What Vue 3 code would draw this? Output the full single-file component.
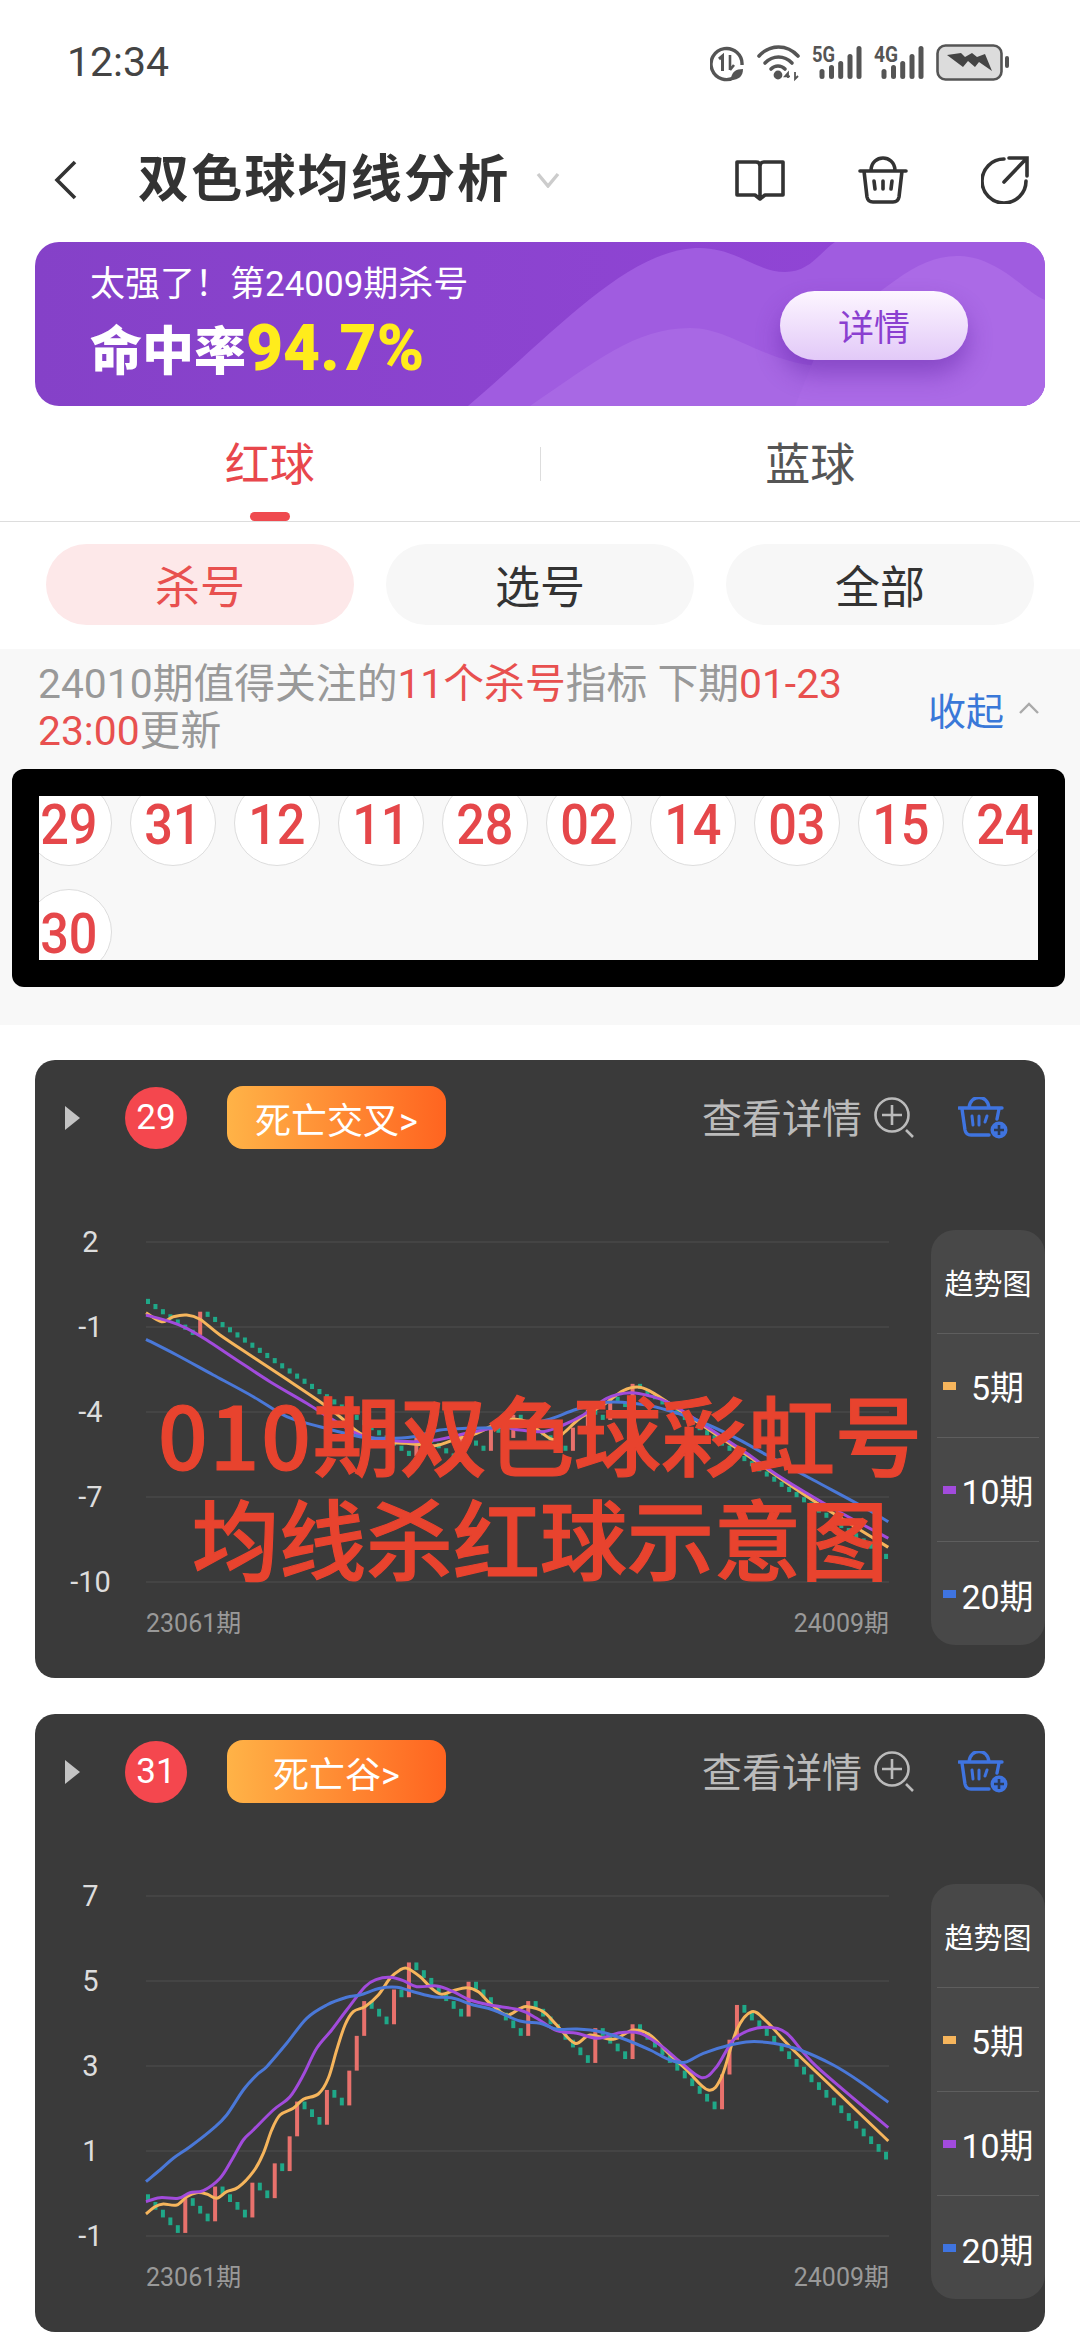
<script setup>
const upFrac = 27 / 33
const downFrac = 6 / 33
const STEP_X = 7.455

// smooth line through points (catmull-rom to bezier)
const smoothPath = (pts) => {
  let d = `M${pts[0][0].toFixed(1)} ${pts[0][1].toFixed(1)}`
  for (let i = 0; i < pts.length - 1; i++) {
    const p0 = pts[Math.max(0, i - 1)]
    const p1 = pts[i]
    const p2 = pts[i + 1]
    const p3 = pts[Math.min(pts.length - 1, i + 2)]
    const c1x = p1[0] + (p2[0] - p0[0]) / 6
    const c1y = p1[1] + (p2[1] - p0[1]) / 6
    const c2x = p2[0] - (p3[0] - p1[0]) / 6
    const c2y = p2[1] - (p3[1] - p1[1]) / 6
    d += `C${c1x.toFixed(1)} ${c1y.toFixed(1)} ${c2x.toFixed(1)} ${c2y.toFixed(1)} ${p2[0].toFixed(1)} ${p2[1].toFixed(1)}`
  }
  return d
}

const scaled = (pts, dx, dy) => pts.map(([x, y]) => [x / 3 + dx, y / 3 + dy])

const buildBars = ({ hits, pxPerUnit, startY }) => {
  const bars = []
  let y = startY
  for (let i = 0; i < 100; i++) {
    const hit = hits.includes(i)
    const delta = hit ? -upFrac * pxPerUnit : downFrac * pxPerUnit
    const prev = i === 0 ? y - delta : y
    const next = i === 0 ? y : y + delta
    bars.push({
      x: i * STEP_X,
      y: Math.min(prev, next),
      h: Math.abs(delta),
      color: hit ? '#e8716c' : '#1fa888'
    })
    y = next
  }
  return bars
}

const crossLines = [
  {
    color: '#f6b55c',
    d: smoothPath([
      ...scaled([[78, 128], [125, 155], [160, 140], [200, 135], [240, 148], [300, 195], [400, 262], [500, 328], [600, 395], [660, 440], [720, 490], [790, 515], [860, 520], [945, 527], [1000, 510], [1070, 490]], -26, 28),
      ...scaled([[50, 160], [95, 148], [140, 155], [215, 208], [250, 190], [300, 145], [370, 105], [430, 62], [480, 52], [530, 75], [590, 115], [680, 175], [800, 255], [900, 325], [1020, 405], [1225, 532]], 334, 128)
    ])
  },
  {
    color: '#a24bdc',
    d: smoothPath([
      ...scaled([[78, 135], [150, 155], [200, 175], [260, 210], [350, 270], [450, 335], [560, 400], [640, 450], [720, 495], [800, 510], [880, 515], [950, 510], [1040, 490]], -26, 28),
      ...scaled([[60, 172], [120, 180], [190, 185], [250, 165], [310, 135], [380, 85], [450, 68], [510, 78], [570, 100], [680, 170], [800, 250], [900, 320], [1050, 410], [1225, 505]], 334, 128)
    ])
  },
  {
    color: '#4a78d8',
    d: smoothPath([
      ...scaled([[78, 208], [170, 255], [280, 315], [400, 380], [500, 440], [600, 470], [720, 500], [800, 505], [880, 500], [960, 480], [1040, 475]], -26, 28),
      ...scaled([[100, 170], [200, 150], [290, 118], [380, 97], [440, 98], [500, 105], [560, 120], [650, 150], [760, 200], [860, 255], [1000, 330], [1130, 400], [1225, 455]], 334, 128)
    ])
  }
]

const valleyLines = [
  {
    color: '#f6b55c',
    d: smoothPath([
      ...scaled([[78, 822], [105, 800], [130, 792], [170, 795], [200, 770], [230, 758], [260, 762], [290, 775], [320, 755], [355, 742], [400, 695], [430, 640], [455, 570], [480, 525], [520, 505], [550, 478], [595, 462], [625, 415], [650, 330], [675, 255], [700, 215], [735, 200], [775, 165], [810, 115], [840, 90], [862, 85], [900, 110], [935, 145], [965, 163], [1000, 152], [1040, 143], [1075, 155], [1110, 190], [1160, 225]], -26, 44),
      ...scaled([[60, 205], [84, 200], [130, 215], [170, 255], [225, 310], [270, 285], [340, 298], [400, 270], [450, 285], [500, 335], [560, 390], [625, 450], [665, 410], [710, 270], [755, 215], [800, 245], [870, 320], [1000, 445], [1165, 603]], 354, 44)
    ])
  },
  {
    color: '#a24bdc',
    d: smoothPath([
      ...scaled([[78, 785], [120, 773], [175, 775], [210, 758], [250, 752], [300, 715], [335, 660], [370, 600], [400, 570], [460, 510], [510, 470], [550, 405], [590, 325], [635, 270], [680, 210], [735, 140], [770, 118], [810, 112], [850, 122], [890, 140], [950, 138], [1000, 155], [1050, 180], [1110, 195]], -26, 44),
      ...scaled([[60, 210], [110, 235], [170, 272], [230, 280], [295, 295], [360, 278], [420, 280], [480, 315], [540, 365], [605, 413], [650, 380], [700, 300], [750, 270], [800, 262], [860, 280], [950, 380], [1165, 563]], 354, 44)
    ])
  },
  {
    color: '#4a78d8',
    d: smoothPath([
      ...scaled([[78, 725], [120, 690], [160, 655], [210, 620], [280, 565], [320, 525], [370, 450], [410, 405], [440, 380], [500, 310], [560, 235], [620, 195], [680, 172], [720, 165], [780, 145], [830, 142], [880, 155], [940, 170], [1000, 175], [1060, 195], [1120, 210]], -26, 44),
      ...scaled([[60, 243], [120, 250], [170, 268], [230, 267], [300, 275], [380, 300], [450, 330], [510, 360], [555, 367], [610, 340], [690, 315], [750, 305], [820, 310], [900, 330], [1000, 375], [1080, 425], [1165, 487]], 354, 44)
    ])
  }
]

const cards = [
  {
    num: '29',
    tag: '死亡交叉>',
    labels: ['2', '-1', '-4', '-7', '-10'],
    overlay: true,
    bars: buildBars({ hits: [7, 36, 42, 46, 49, 57, 59, 62, 65], pxPerUnit: 85 / 3, startY: 62 }),
    lines: crossLines
  },
  {
    num: '31',
    tag: '死亡谷>',
    labels: ['7', '5', '3', '1', '-1'],
    overlay: false,
    bars: buildBars({ hits: [5, 9, 14, 17, 19, 20, 24, 27, 28, 29, 33, 35, 43, 51, 60, 65, 77, 78, 79], pxPerUnit: 42.5, startY: 306 }),
    lines: valleyLines
  }
]

const killNumbers = ['29', '31', '12', '11', '28', '02', '14', '03', '15', '24', '30']
const grid = [0, 85, 170, 255, 340]
const legend = [
  { label: '5期', color: '#f6b55c' },
  { label: '10期', color: '#a24bdc' },
  { label: '20期', color: '#3f74e0' }
]
const signalBars = [
  { dx: 0, top: 67 },
  { dx: 9.5, top: 63 },
  { dx: 18.7, top: 59 },
  { dx: 28, top: 52 },
  { dx: 37, top: 44 }
]
</script>

<template>
  <div class="page">
    <div class="status-bar">
      <span class="time">12:34</span>
      <svg class="status-icons" width="305" height="44" viewBox="710 38 305 44">
        <g fill="none" stroke="#555" stroke-width="3.4">
          <path d="M735 75 A15.5 15.5 0 1 1 742 63" />
          <path d="M719 57 l3.5 -3 v15" stroke-width="3" />
          <path d="M730 53 v15 M730 68 l4 -5" stroke-width="2.6" />
        </g>
        <path d="M731 78 C731 70 736 67 743 67 C743 74 739 78 731 78Z" fill="#555" />

        <g fill="none" stroke="#555" stroke-width="3.6" stroke-linecap="round">
          <path d="M759 54 C770 42 787 42 798 54" />
          <path d="M765 61 C773 53 784 53 792 61" />
          <path d="M771 67 C775 63 781 63 785 67" />
        </g>
        <circle cx="778" cy="73" r="4.4" fill="#555" />
        <path d="M788 76 v-5 l-3 3.4 h5 M795 70 v7 l3 -3" fill="none" stroke="#555" stroke-width="1.8" />

        <text x="812" y="60" class="net-label" textLength="23" lengthAdjust="spacingAndGlyphs">5G</text>
        <rect v-for="b in signalBars" :key="'a' + b.dx" :x="819.5 + b.dx" :y="b.top" width="5" :height="77 - b.top" rx="2.5" fill="#555" />
        <text x="874" y="60" class="net-label" textLength="24" lengthAdjust="spacingAndGlyphs">4G</text>
        <rect v-for="b in signalBars" :key="'b' + b.dx" :x="881.5 + b.dx" :y="b.top" width="5" :height="77 - b.top" rx="2.5" fill="#555" />

        <rect x="937.5" y="43.5" width="64" height="34" rx="8" fill="#dcdcdc" stroke="#555" stroke-width="2.6" />
        <path d="M947 53 L961 51 L965 55 L972 51 L977 55 L985 52 L992 69 L979 60 L975 65 L968 59 L963 65Z" fill="#444" />
        <rect x="1005" y="54" width="4" height="12" rx="2" fill="#555" />
      </svg>
    </div>

    <div class="nav-bar">
      <svg class="back-icon" width="24" height="40" viewBox="0 0 24 40">
        <path d="M21 2 L3 20 L21 38" fill="none" stroke="#333" stroke-width="3.6" />
      </svg>
      <h1 class="title">双色球均线分析</h1>
      <svg class="title-arrow" width="24" height="16" viewBox="0 0 24 16">
        <path d="M2 2 L12 14 L22 2" fill="none" stroke="#ccc" stroke-width="3.4" />
      </svg>
      <div class="nav-actions">
        <svg width="50" height="42" viewBox="0 0 50 42">
          <path d="M2 3 H21 Q25 3 25 7 Q25 3 29 3 H48 V36 H30 L25 40 L20 36 H2Z M25 7 V38" fill="none" stroke="#333" stroke-width="3.6" stroke-linejoin="round" />
        </svg>
        <svg width="50" height="48" viewBox="0 0 50 48">
          <path d="M13 14 C14 -2 36 -2 37 14 M2 15 H48 M6 15 L9 41 Q10 46 15 46 H35 Q40 46 41 41 L44 15" fill="none" stroke="#333" stroke-width="3.6" stroke-linecap="round" />
          <path d="M16 25 L17 33 M25 25 V33 M34 25 L33 33" fill="none" stroke="#333" stroke-width="3.6" stroke-linecap="round" />
        </svg>
        <svg width="49" height="48" viewBox="0 0 49 48">
          <path d="M23 3 A22 22 0 1 0 45 25 M23 26 L45 3 M28 2 H46 V20" fill="none" stroke="#333" stroke-width="3.6" stroke-linecap="round" />
        </svg>
      </div>
    </div>

    <div class="banner">
      <svg class="banner-waves" width="1010" height="164" viewBox="0 0 1010 164">
        <path d="M433 164 C520 90 590 10 660 6 C700 4 720 30 750 30 C775 30 785 10 800 0 H1010 V164Z" fill="#a05ce0" />
        <path d="M495 164 C560 120 600 86 655 86 C700 86 730 125 800 125 L1010 164Z" fill="#a868e4" />
        <path d="M790 90 C850 50 880 12 925 14 C965 16 990 50 1010 58 V164 H760Z" fill="#ab6ae6" />
      </svg>
      <div class="banner-text">
        <p class="banner-line">太强了！第24009期杀号</p>
        <p class="banner-rate">命中率<span class="rate-num">94.7%</span></p>
      </div>
      <button class="banner-btn">详情</button>
    </div>

    <div class="tabs">
      <div class="tab active">红球</div>
      <div class="tab-divider"></div>
      <div class="tab">蓝球</div>
    </div>

    <div class="pills">
      <div class="pill active">杀号</div>
      <div class="pill">选号</div>
      <div class="pill">全部</div>
    </div>

    <section class="kill-section">
      <div class="notice-row">
        <p class="notice">24010期值得关注的<em>11个杀号</em>指标 下期<em>01-23 23:00</em>更新</p>
        <div class="collapse">
          收起
          <svg width="22" height="14" viewBox="0 0 22 14">
            <path d="M2 12 L11 3 L20 12" fill="none" stroke="#aaa" stroke-width="2.4" />
          </svg>
        </div>
      </div>
      <div class="black-box">
        <div class="ball-clip">
          <div class="ball-grid">
            <div v-for="n in killNumbers" :key="n" class="ball"><span class="ball-num">{{ n }}</span></div>
          </div>
        </div>
      </div>
    </section>

    <div class="card-list">
      <article v-for="card in cards" :key="card.num" class="card">
        <header class="card-head">
          <i class="play"></i>
          <span class="num-ball">{{ card.num }}</span>
          <span class="tag">{{ card.tag }}</span>
          <span class="detail">查看详情</span>
          <svg class="zoom-icon" width="42" height="42" viewBox="0 0 42 42">
            <circle cx="19" cy="18" r="16.5" fill="none" stroke="#bbb" stroke-width="2.6" />
            <path d="M19 8 V28 M9 18 H29 M33 33 L40 40" fill="none" stroke="#bbb" stroke-width="2.6" />
          </svg>
          <svg class="cart-icon" width="50" height="42" viewBox="0 0 50 42">
            <path d="M11 11 C12 -3 30 -3 31 11 M1 11 H44 M4 12 L7 33 Q8 38 13 38 H31 M41 12 L39 22" fill="none" stroke="#3f74e0" stroke-width="3.4" stroke-linecap="round" />
            <path d="M14 19 L15 28 M21 19 V28 M29 19 L27 25" fill="none" stroke="#3f74e0" stroke-width="3" stroke-linecap="round" />
            <circle cx="41" cy="33" r="8.5" fill="#3f74e0" />
            <path d="M41 28 V38 M36 33 H46" stroke="#2b3a55" stroke-width="2.6" />
          </svg>
        </header>

        <div class="card-body">
          <div class="y-axis">
            <span v-for="label in card.labels" :key="label">{{ label }}</span>
          </div>
          <div class="plot">
            <svg class="plot-svg" width="743" height="340" viewBox="0 0 743 340">
              <line v-for="y in grid" :key="y" x1="0" x2="743" :y1="y" :y2="y" stroke="#444" stroke-width="2" />
              <rect v-for="(b, i) in card.bars" :key="i" :x="b.x" :y="b.y" width="4" :height="b.h" :fill="b.color" />
              <path v-for="l in card.lines" :key="l.color" :d="l.d" fill="none" :stroke="l.color" stroke-width="3" />
            </svg>
            <div class="x-axis">
              <span>23061期</span>
              <span>24009期</span>
            </div>
          </div>
          <aside class="side-panel">
            <div class="side-row side-title">趋势图</div>
            <div v-for="item in legend" :key="item.label" class="side-row">
              <i class="swatch" :style="{ background: item.color }"></i>
              <span class="side-label">{{ item.label }}</span>
            </div>
          </aside>
        </div>

        <div v-if="card.overlay" class="overlay-text">
          <div><span class="overlay-digits">010</span>期双色球彩虹号</div>
          <div>均线杀红球示意图</div>
        </div>
      </article>
    </div>
  </div>
</template>

<style>
html,
body {
  margin: 0;
  background: #fff;
}
</style>

<style scoped>
.page {
  width: 1080px;
  height: 2340px;
  overflow: hidden;
  background: #fff;
  font-family: Roboto, "Noto Sans CJK SC", sans-serif;
  color: #333;
}

p,
h1 {
  margin: 0;
}

.status-bar {
  height: 124px;
  display: flex;
  align-items: center;
  padding: 0 65px 0 67px;
  box-sizing: border-box;
}

.time {
  font-size: 41px;
  color: #444;
}

.status-icons {
  margin-left: auto;
}

.net-label {
  font-family: Roboto, sans-serif;
  font-weight: 700;
  font-size: 22px;
  fill: #555;
}

.nav-bar {
  height: 112px;
  display: flex;
  align-items: center;
  padding: 0 50px 0 54px;
  margin-bottom: 6px;
}

.title {
  margin-left: 60px;
  font-size: 51px;
  font-weight: 700;
  line-height: 60px;
  color: #333;
  white-space: nowrap;
  letter-spacing: 2.2px;
}

.title-arrow {
  margin-left: 26px;
}

.nav-actions {
  margin-left: auto;
  display: flex;
  align-items: center;
  gap: 73px;
}

.banner {
  position: relative;
  margin: 0 35px;
  height: 164px;
  border-radius: 24px;
  overflow: hidden;
  background: linear-gradient(90deg, #8541c8, #9346d8);
  display: flex;
  align-items: center;
  justify-content: space-between;
  padding: 0 77px 0 55px;
  box-sizing: border-box;
}

.banner-waves {
  position: absolute;
  left: 0;
  top: 0;
}

.banner-text,
.banner-btn {
  position: relative;
}

.banner-text {
  padding-top: 3px;
}

.banner-line {
  font-size: 35px;
  line-height: 44px;
  color: #fff;
}

.banner-rate {
  margin-top: 7px;
  font-size: 52px;
  line-height: 70px;
  font-weight: 900;
  color: #fff;
  white-space: nowrap;
}

.rate-num {
  font-size: 64px;
  color: #ffec1c;
}

.banner-btn {
  width: 188px;
  height: 69px;
  margin-top: 2px;
  border: none;
  border-radius: 35px;
  background: linear-gradient(180deg, #fdf6ff, #e2c9f8);
  box-shadow: 0 14px 24px rgba(90, 30, 160, 0.45);
  color: #8a3fd0;
  font-family: inherit;
  font-size: 36px;
}

.tabs {
  height: 116px;
  display: flex;
  align-items: center;
  border-bottom: 1px solid #ddd;
  box-sizing: border-box;
}

.tab {
  flex: 1;
  height: 100%;
  box-sizing: border-box;
  padding-bottom: 5px;
  display: flex;
  align-items: center;
  justify-content: center;
  font-size: 45px;
  color: #555;
  position: relative;
}

.tab.active {
  color: #e8474c;
}

.tab.active::after {
  content: '';
  position: absolute;
  left: 50%;
  bottom: 0;
  width: 40px;
  height: 9px;
  margin-left: -20px;
  border-radius: 5px;
  background: #ef4a4f;
}

.tab-divider {
  width: 1px;
  height: 34px;
  background: #ddd;
}

.pills {
  display: flex;
  gap: 32px;
  padding: 22px 46px 24px;
}

.pill {
  flex: 1;
  height: 81px;
  border-radius: 41px;
  background: #f7f7f7;
  display: flex;
  align-items: center;
  justify-content: center;
  font-size: 45px;
  color: #333;
}

.pill.active {
  background: #fde8e9;
  color: #e8504f;
}

.kill-section {
  background: #f8f8f8;
  height: 376px;
  box-sizing: border-box;
  padding-top: 12px;
}

.notice-row {
  display: flex;
  align-items: center;
  justify-content: space-between;
  padding: 0 40px 0 38px;
  margin-bottom: 14px;
}

.notice {
  width: 830px;
  font-size: 40.8px;
  line-height: 47px;
  color: #999;
}

.notice em {
  font-style: normal;
  color: #e8504f;
}

.collapse {
  display: flex;
  align-items: center;
  gap: 14px;
  font-size: 38px;
  color: #3a78d8;
}

.black-box {
  width: 1053px;
  height: 218px;
  margin-left: 12px;
  box-sizing: border-box;
  padding: 27px;
  background: #000;
  border-radius: 12px;
}

.ball-clip {
  height: 164px;
  overflow: hidden;
  background: #f8f8f8;
}

.ball-grid {
  display: flex;
  flex-wrap: wrap;
  gap: 23px 18px;
  width: 1060px;
  margin: -16px 0 0 -13px;
}

.ball {
  width: 86px;
  height: 86px;
  box-sizing: border-box;
  border: 1px solid #ddd;
  border-radius: 50%;
  background: #fff;
  display: flex;
  align-items: center;
  justify-content: center;
  color: #e5474a;
}

.ball-num {
  display: inline-block;
  font-size: 56px;
  font-weight: 500;
  white-space: nowrap;
  transform: translateY(2px) scaleX(0.9);
}

.card-list {
  display: flex;
  flex-direction: column;
  gap: 36px;
  padding: 35px 35px 0;
}

.card {
  position: relative;
  height: 618px;
  box-sizing: border-box;
  padding-top: 26px;
  border-radius: 20px;
  background: #3a3a3a;
}

.card-head {
  height: 63px;
  display: flex;
  align-items: center;
  padding: 0 37px 0 30px;
}

.play {
  width: 0;
  height: 0;
  border-style: solid;
  border-width: 12px 0 12px 15px;
  border-color: transparent transparent transparent #c4c4c4;
}

.num-ball {
  width: 62px;
  height: 62px;
  margin-left: 45px;
  border-radius: 50%;
  background: #f4474e;
  color: #fff;
  font-size: 35px;
  display: flex;
  align-items: center;
  justify-content: center;
}

.tag {
  width: 219px;
  height: 63px;
  margin-left: 40px;
  border-radius: 16px;
  background: linear-gradient(90deg, #ffb347, #ff6420);
  color: #fff;
  font-size: 36px;
  display: flex;
  align-items: center;
  justify-content: center;
}

.detail {
  margin-left: auto;
  margin-top: -3px;
  font-size: 40px;
  color: #bbb;
}

.zoom-icon {
  margin-left: 11px;
}

.cart-icon {
  margin-left: 43px;
}

.card-body {
  display: flex;
  margin-top: 81px;
}

.y-axis {
  width: 111px;
  height: 380px;
  margin-top: -8px;
  display: flex;
  flex-direction: column;
  justify-content: space-between;
  align-items: center;
  font-size: 29px;
  line-height: 40px;
  color: #ddd;
}

.plot {
  width: 743px;
  margin-right: 42px;
  padding-top: 12px;
}

.plot-svg {
  display: block;
  overflow: visible;
}

.x-axis {
  display: flex;
  justify-content: space-between;
  margin-top: 25px;
  font-size: 25px;
  line-height: 34px;
  color: #999;
}

.side-panel {
  width: 114px;
  height: 415px;
  box-sizing: border-box;
  padding: 0 6px;
  border-radius: 24px;
  background: #484848;
}

.side-row {
  height: 104px;
  box-sizing: border-box;
  display: flex;
  align-items: center;
  border-bottom: 1px solid #5e5e5e;
  color: #fff;
}

.side-row:last-child {
  border-bottom: none;
}

.side-title {
  justify-content: center;
  font-size: 29px;
  white-space: nowrap;
}

.swatch {
  width: 13px;
  height: 8px;
  margin-left: 6px;
}

.side-label {
  flex: 1;
  text-align: center;
  font-size: 34px;
  white-space: nowrap;
}

.overlay-text {
  position: absolute;
  left: 0;
  right: 0;
  top: 320px;
  text-align: center;
  font-family: "Noto Sans CJK SC", sans-serif;
  font-weight: 500;
  -webkit-text-stroke: 1.2px #e8432e;
  font-size: 87px;
  line-height: 104px;
  color: #e8432e;
  white-space: nowrap;
}

.overlay-digits {
  letter-spacing: 2px;
}
</style>
